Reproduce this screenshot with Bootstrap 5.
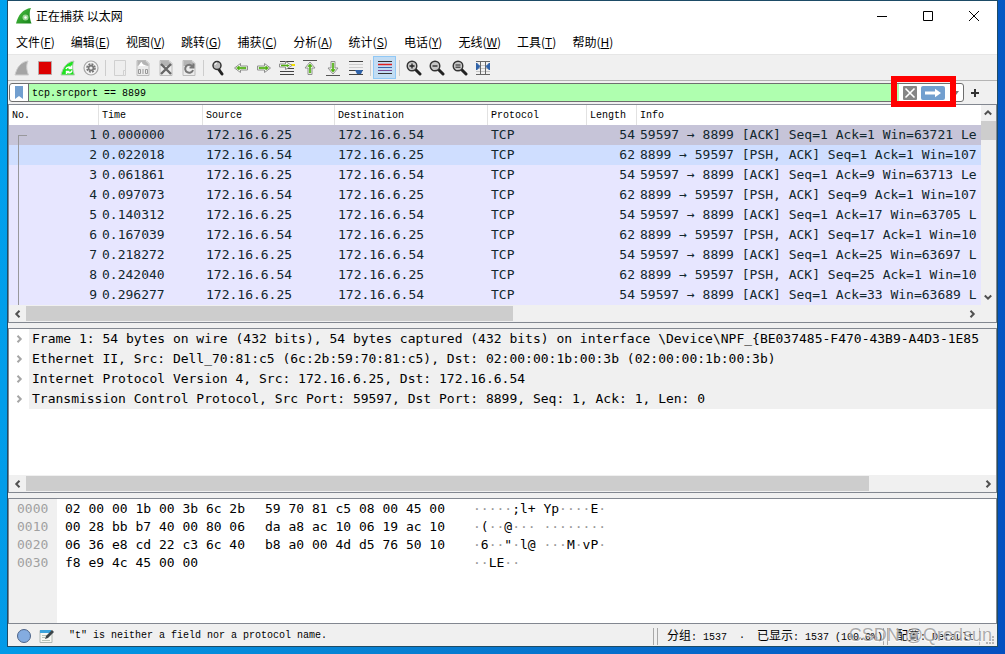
<!DOCTYPE html>
<html lang="zh-CN">
<head>
<meta charset="utf-8">
<meta name="viewport" content="width=device-width, initial-scale=1">
<title>正在捕获 以太网</title>
<link href="https://cdn.jsdelivr.net/npm/bootstrap@5.3.0/dist/css/bootstrap.min.css" rel="stylesheet">
<style>
  :root { --face: #f0f0f0; --edge: #828790; --thumb: #cdcdcd; --ui: "Noto Sans CJK SC", sans-serif; --fixed: "DejaVu Sans Mono", monospace; --small: "Liberation Mono", "Noto Sans CJK SC", monospace; }
  body { background: linear-gradient(100deg, #00a2ee 0%, #0780d2 45%, #0450c0 100%); font-family: var(--ui); font-size: 12px; line-height: 20px; color: #000; }
  .desktop { padding: 0 7px 7px; }
  .app { border: 1px solid #1d4b66; background: var(--face); }
  .btn { --bs-btn-padding-x: 0; --bs-btn-padding-y: 0; --bs-btn-border-radius: 0; --bs-btn-border-width: 0; line-height: 1; display: flex; align-items: center; justify-content: center; }
  .titlebar { height: 30px; }
  .titlebar .btn { width: 46px; height: 30px; }
  .menus { height: 23px; padding-top: 1px; }
  .menus a { color: #000; text-decoration: none; padding: 0 8px; white-space: nowrap; }
  .tools { height: 27px; border-top: 1px solid #e6e6e6; border-bottom: 1px solid #b4b4b4; padding: 0 2px; }
  .tools .btn { width: 23px; height: 23px; }
  .tools .chosen { background: #c2dcf3; border: 1px solid #90c8f6; }
  .sep { width: 6px; height: 16px; background: linear-gradient(#cdcdcd, #cdcdcd) center / 1px 100% no-repeat; }
  .filterrow { height: 23px; padding: 2px 13px 2px 1px; }
  .filterbox { height: 19px; border: 1px solid #6e6e6e; border-radius: 3px; background: #fff; margin-right: 2px; }
  .filterbox input { background: #afffaf; border: 0; border-left: 1px solid #6e6e6e; outline: 0; height: 17px; padding: 1px 3px 0; font: 10px/16px var(--small); }
  .filterbox .btn { height: 17px; }
  .callout-box { position: absolute; inset: -8px -11px -6px -8px; border: 6px solid #f00; pointer-events: none; z-index: 2; }
  .pane { border: 1px solid var(--edge); background: #fff; min-height: 0; }
  .fixed { font-family: var(--fixed); font-size: 13px; }
  .packets { table-layout: fixed; width: 100%; border-collapse: separate; border-spacing: 0; color: #12272e; }
  .packets th { font: 10px/18px var(--small); color: #000; border-right: 1px solid #e2e2e2; padding: 2px 3px 0; height: 20px; background: #fff; white-space: nowrap; }
  .packets th:last-child { border: 0; }
  .packets td { height: 20px; line-height: 20px; padding: 0 3px; white-space: pre; overflow: hidden; background: #e7e6ff; }
  .packets td:nth-child(1), .packets td:nth-child(6) { text-align: right; padding-right: 2px; }
  .packets td:first-child { position: relative; }
  .packets td:first-child::before { content: ""; position: absolute; left: 9px; top: 0; bottom: 0; border-left: 1px solid #98989c; }
  .packets .current td { background: #c6c4d8; }
  .packets .current td:first-child::before { top: 10px; width: 9px; border-top: 1px solid #98989c; }
  .packets .hovered td { background: #cfdeff; }
  .vbar { width: 16px; background: var(--face); }
  .vbar .btn { height: 16px; width: 15px; }
  .vthumb { height: 19px; width: 15px; background: var(--thumb); }
  .hbar { height: 17px; padding-top: 1px; background: var(--face); }
  .hbar .btn { width: 17px; height: 15px; }
  .hthumb { height: 15px; background: var(--thumb); }
  .details { margin: 5px 0; }
  .detail { background: var(--face); height: 20px; white-space: pre; overflow: hidden; padding-left: 3px; }
  .twist { width: 20px; height: 20px; flex: none; background: #fff; }
  .rawdata { height: 126px; line-height: 18px; }
  .rawdata pre { font: inherit; overflow: visible; margin: 0; padding-top: 1px; }
  .rawdata .offsets { background: var(--face); color: #a0a0a0; width: 48px; padding: 1px 0 0 8px; }
  .rawdata .octets { width: 200px; }
  .rawdata i { font-style: normal; color: #999; }
  .status { height: 22px; font: 10px/20px var(--small); white-space: pre; padding: 2px 0 0 9px; }
  .zh { font-family: var(--ui); font-size: 12px; }
  .message { padding-left: 14px; }
  .grip { width: 5px; height: 17px; border: solid #a8a8a8; border-width: 0 1px; flex: none; }
  .counts { padding: 0 0 0 9px; }
  .profile { padding: 0 5px 0 8px; }
  .brand { position: absolute; right: 5px; bottom: 0; font: 18px/21px "Liberation Sans", sans-serif; color: rgba(105,105,105,.55); text-shadow: 0 1px 1px #fff; pointer-events: none; }
</style>
</head>
<body>
<svg class="position-absolute" width="0" height="0" aria-hidden="true">
  <defs>
    <linearGradient id="gf" x1="0" y1="0" x2="1" y2="1"><stop stop-color="#4fc443"/><stop offset="1" stop-color="#16821a"/></linearGradient>
    <symbol id="fwd" viewBox="0 0 16 16"><path d="M1.500 6h7V3.500L14.500 8l-6 4.500V10h-7z" fill="#fff" stroke="#8f8f8f"/><path d="M3 7.300h6.800V6L12.600 8 9.800 10V8.700H3z" fill="#4fae12" stroke="#4fae12" stroke-width=".6"/></symbol>
    <symbol id="up" viewBox="0 0 16 16"><path d="M1 .5h14" stroke="#555"/><path d="M6 14.500V8H3L8 2l5 6h-3v6.500z" fill="#fff" stroke="#8f8f8f"/><path d="M7.300 13V6.500H5.800L8 3.800l2.200 2.700H8.700V13z" fill="#4fae12" stroke="#4fae12" stroke-width=".6"/></symbol>
    <symbol id="lens" viewBox="0 0 16 16"><path d="m9.500 9.500 4.500 4.500" stroke="#222" stroke-width="3" stroke-linecap="round"/><circle cx="6" cy="6" r="4.800" fill="#c6c6c6" stroke="#333" stroke-width="1.400"/></symbol>
    <symbol id="page" viewBox="0 0 16 16"><path d="M2 .5h9l3 3v12H2z" fill="#ececec" stroke="#bcbcbc"/><path d="M2.500 1h8l3 3v2h-11z" fill="#b4b4b4"/></symbol>
    <symbol id="left" viewBox="0 0 8 8"><path d="M5.500 .8 2.300 4l3.200 3.200" fill="none" stroke="#505050" stroke-width="2"/></symbol>
    <symbol id="right" viewBox="0 0 8 8"><path d="M2.500 .8 5.700 4 2.500 7.200" fill="none" stroke="currentColor" stroke-width="2"/></symbol>
  </defs>
</svg>
<div class="desktop d-flex flex-column vh-100">
<main class="app d-flex flex-column flex-grow-1 position-relative">
  <header class="titlebar d-flex align-items-center bg-white ps-2">
    <svg width="16" height="16" viewBox="0 0 16 16" aria-hidden="true"><path d="M0 15.500C2 7 7 1 15 0c-2 4-1.500 10 .5 15.500z" fill="url(#gf)"/><circle cx="9.500" cy="9.500" r="3" fill="#b5e3ac" opacity=".8"/><circle cx="9.500" cy="9.500" r="1.200" fill="#fff"/></svg>
    <span class="ms-1 me-auto">正在捕获 以太网</span>
    <button class="btn" aria-label="最小化"><svg width="10" height="10"><path d="M0 5.500h10" stroke="#000"/></svg></button>
    <button class="btn" aria-label="最大化"><svg width="10" height="10"><path d="M.5.500h9v9h-9z" fill="none" stroke="#000"/></svg></button>
    <button class="btn" aria-label="关闭"><svg width="10" height="10"><path d="m0 0 10 10M10 0 0 10" stroke="#000"/></svg></button>
  </header>
  <nav class="menus d-flex bg-white" aria-label="菜单">
    <a href="#">文件(<u>F</u>)</a><a href="#">编辑(<u>E</u>)</a><a href="#">视图(<u>V</u>)</a><a href="#">跳转(<u>G</u>)</a><a href="#">捕获(<u>C</u>)</a><a href="#">分析(<u>A</u>)</a><a href="#">统计(<u>S</u>)</a><a href="#">电话(<u>Y</u>)</a><a href="#">无线(<u>W</u>)</a><a href="#">工具(<u>T</u>)</a><a href="#">帮助(<u>H</u>)</a>
  </nav>
  <div class="tools d-flex align-items-center" role="toolbar" aria-label="主工具栏">
    <button class="btn" aria-label="开始捕获"><svg width="16" height="16"><path d="M1 15C3 7 7 2 14 1c-2 4-1.500 9 .5 14z" fill="#a5a5a5" stroke="#ccc"/></svg></button>
    <button class="btn" aria-label="停止捕获"><svg width="14" height="14"><path d="M.5.500h13v13H.5z" fill="#d00" stroke="#b9a7a7"/></svg></button>
    <button class="btn" aria-label="重新捕获"><svg width="16" height="16"><path d="M1 15C3 7 7 2 14 1c-2 4-1.500 9 .5 14z" fill="#1fe41f" stroke="#b5c9b5"/><path d="M6 9a3 3 0 0 1 5-1M12 10.500a3 3 0 0 1-5 1.500M11.500 5.500V8.500H8.500M6.500 14v-2.500h3" fill="none" stroke="#fff" stroke-width="1.400"/></svg></button>
    <button class="btn" aria-label="捕获选项"><svg width="16" height="16"><circle cx="8" cy="8" r="7" fill="#f4f4f4" stroke="#a6a6a6" stroke-width="1.200"/><circle cx="8" cy="8" r="4" fill="none" stroke="#777" stroke-width="1.600" stroke-dasharray="2 1.140"/><circle cx="8" cy="8" r="3.200" fill="#777"/><circle cx="8" cy="8" r="1.600" fill="#eee"/></svg></button>
    <span class="sep"></span>
    <button class="btn" aria-label="打开"><svg width="14" height="16"><path d="M1.500.5h11v10h-2v5h-9zM10.500 15.500h2v-5" fill="#eee" stroke="#d0d0d0"/></svg></button>
    <button class="btn" aria-label="保存"><svg width="16" height="16"><use href="#page"/><path d="M3 6c2-1 2-4 4-4 0 3 3 3 6 4z" fill="#fff"/><path d="M3.500 9.500h2v4h-2zM8 9v5M10.500 9.500h2v4h-2z" fill="none" stroke="#999"/></svg></button>
    <button class="btn" aria-label="关闭文件"><svg width="16" height="16"><use href="#page"/><path d="m3 4 10 10M13 4 3 14" stroke="#666" stroke-width="2.400"/></svg></button>
    <button class="btn" aria-label="重新加载"><svg width="16" height="16"><use href="#page"/><path d="M11.500 6.500A4 4 0 1 0 12 10M12.500 3.500v4h-4" fill="none" stroke="#777" stroke-width="2"/></svg></button>
    <span class="sep"></span>
    <button class="btn" aria-label="查找"><svg width="14" height="16" viewBox="0 0 14 16"><path d="m7.500 9 3.500 5" stroke="#222" stroke-width="3" stroke-linecap="round"/><circle cx="6" cy="5.500" r="4" fill="#bbb" stroke="#333" stroke-width="1.500"/><path d="M4 5a2 2 0 0 1 2-2" stroke="#fff" fill="none"/></svg></button>
    <button class="btn" aria-label="后退"><svg width="16" height="16"><use href="#fwd" transform="matrix(-1 0 0 1 16 0)"/></svg></button>
    <button class="btn" aria-label="前进"><svg width="16" height="16"><use href="#fwd"/></svg></button>
    <button class="btn" aria-label="转到分组"><svg width="16" height="16"><path d="M1 1.500h14M1 11.500h14M1 14.500h14M8 8.500h7" stroke="#444"/><path d="M10 5h6" stroke="#f3e000" stroke-width="2"/><path d="M.5 4h6V1.500L13 5.500l-6.500 4V7h-6z" fill="#fff" stroke="#8f8f8f"/><path d="M2 4.800h5.800V3.900L10.800 5.500 7.800 7.200V6.300H2z" fill="#4fae12"/></svg></button>
    <button class="btn" aria-label="首个分组"><svg width="16" height="16"><use href="#up"/></svg></button>
    <button class="btn" aria-label="最后分组"><svg width="16" height="16"><use href="#up" transform="matrix(1 0 0 -1 0 16)"/></svg></button>
    <button class="btn" aria-label="自动滚动"><svg width="16" height="16"><path d="M1 1.500h14M1 10.500h14M1 14.500h14" stroke="#444"/><path d="M1 4.500h14M1 7.500h14" stroke="#ccc"/><path d="M7 10h8l-2 4H9z" fill="#2f62a8"/></svg></button>
    <span class="sep"></span>
    <button class="btn chosen" aria-label="着色"><svg width="16" height="16"><path d="M1 1.500h14M1 13.500h14" stroke="#333"/><path d="M1 4.500h14" stroke="#e02020" stroke-width="1.500"/><path d="M1 7.500h14" stroke="#3566a8"/><path d="M1 10.500h14" stroke="#7a4a98"/></svg></button>
    <span class="sep"></span>
    <button class="btn" aria-label="放大"><svg width="16" height="16"><use href="#lens"/><path d="M3.500 6h5M6 3.500v5" stroke="#222" stroke-width="1.300"/></svg></button>
    <button class="btn" aria-label="缩小"><svg width="16" height="16"><use href="#lens"/><path d="M3.500 6h5" stroke="#222" stroke-width="1.300"/></svg></button>
    <button class="btn" aria-label="原始大小"><svg width="16" height="16"><use href="#lens"/><path d="M3.500 5h5M3.500 7.200h5" stroke="#222"/></svg></button>
    <button class="btn" aria-label="调整列宽"><svg width="16" height="16"><path d="M1 5.500h14M1 8.500h14M1 11.500h14" stroke="#c4c4c4"/><path d="M1 1.500h14M1 14.500h14M5.500 1v14M10.500 1v14" stroke="#666"/><path d="M1.500 3v7L5 6.500zM14.500 3v7L11 6.500z" fill="#2f62a8" stroke="#2f62a8"/></svg></button>
  </div>
  <form class="filterrow d-flex align-items-center" onsubmit="return false">
    <div class="filterbox d-flex align-items-center flex-grow-1">
      <button type="button" class="btn px-1" aria-label="书签"><svg width="10" height="14"><path d="M1 0h8v13L5 10l-4 3z" fill="#729fcf"/></svg></button>
      <input class="flex-grow-1" type="text" aria-label="显示过滤器" value="tcp.srcport == 8899" spellcheck="false">
      <div class="d-flex gap-1 ps-1 position-relative">
        <button type="button" class="btn" aria-label="清除"><svg width="14" height="14"><rect width="14" height="14" rx="1" fill="#858585"/><path d="m2.500 2.500 9 9M11.500 2.500l-9 9" stroke="#fff" stroke-width="1.600"/></svg></button>
        <button type="submit" class="btn" aria-label="应用"><svg width="24" height="14"><rect width="24" height="14" rx="2" fill="#729fcf"/><path d="M4 5.500h10V2.800L20 7l-6 4.200V8.500H4z" fill="#fff"/></svg></button>
        <span class="callout-box"></span>
      </div>
      <button type="button" class="btn ps-2 pe-1" aria-label="历史"><svg width="6" height="4"><path d="M0 0h6L3 4z" fill="#777"/></svg></button>
    </div>
    <button type="button" class="btn px-1" aria-label="添加按钮"><svg width="10" height="10"><path d="M1 5h8M5 1v8" stroke="#333" stroke-width="2"/></svg></button>
  </form>
  <section class="pane" aria-label="分组列表">
    <div class="d-flex">
      <div class="flex-grow-1 overflow-hidden">
        <table class="packets fixed">
          <colgroup><col style="width:90px"><col style="width:104px"><col style="width:132px"><col style="width:153px"><col style="width:99px"><col style="width:50px"><col></colgroup>
          <thead><tr><th>No.</th><th>Time</th><th>Source</th><th>Destination</th><th>Protocol</th><th>Length</th><th>Info</th></tr></thead>
          <tbody>
            <tr class="current"><td>1</td><td>0.000000</td><td>172.16.6.25</td><td>172.16.6.54</td><td>TCP</td><td>54</td><td>59597 → 8899 [ACK] Seq=1 Ack=1 Win=63721 Le</td></tr>
            <tr class="hovered"><td>2</td><td>0.022018</td><td>172.16.6.54</td><td>172.16.6.25</td><td>TCP</td><td>62</td><td>8899 → 59597 [PSH, ACK] Seq=1 Ack=1 Win=107</td></tr>
            <tr><td>3</td><td>0.061861</td><td>172.16.6.25</td><td>172.16.6.54</td><td>TCP</td><td>54</td><td>59597 → 8899 [ACK] Seq=1 Ack=9 Win=63713 Le</td></tr>
            <tr><td>4</td><td>0.097073</td><td>172.16.6.54</td><td>172.16.6.25</td><td>TCP</td><td>62</td><td>8899 → 59597 [PSH, ACK] Seq=9 Ack=1 Win=107</td></tr>
            <tr><td>5</td><td>0.140312</td><td>172.16.6.25</td><td>172.16.6.54</td><td>TCP</td><td>54</td><td>59597 → 8899 [ACK] Seq=1 Ack=17 Win=63705 L</td></tr>
            <tr><td>6</td><td>0.167039</td><td>172.16.6.54</td><td>172.16.6.25</td><td>TCP</td><td>62</td><td>8899 → 59597 [PSH, ACK] Seq=17 Ack=1 Win=10</td></tr>
            <tr><td>7</td><td>0.218272</td><td>172.16.6.25</td><td>172.16.6.54</td><td>TCP</td><td>54</td><td>59597 → 8899 [ACK] Seq=1 Ack=25 Win=63697 L</td></tr>
            <tr><td>8</td><td>0.242040</td><td>172.16.6.54</td><td>172.16.6.25</td><td>TCP</td><td>62</td><td>8899 → 59597 [PSH, ACK] Seq=25 Ack=1 Win=10</td></tr>
            <tr><td>9</td><td>0.296277</td><td>172.16.6.25</td><td>172.16.6.54</td><td>TCP</td><td>54</td><td>59597 → 8899 [ACK] Seq=1 Ack=33 Win=63689 L</td></tr>
          </tbody>
        </table>
      </div>
      <div class="vbar d-flex flex-column">
        <button class="btn" aria-label="向上"><svg width="8" height="8"><use href="#left" transform="rotate(90 4 4)"/></svg></button>
        <div class="vthumb mb-auto"></div>
        <button class="btn" aria-label="向下"><svg width="8" height="8"><use href="#left" transform="rotate(-90 4 4)"/></svg></button>
      </div>
    </div>
    <div class="hbar d-flex pe-3">
      <button class="btn" aria-label="向左"><svg width="8" height="8"><use href="#left"/></svg></button>
      <div class="flex-grow-1"><div class="hthumb" style="width:52%"></div></div>
      <button class="btn" aria-label="向右"><svg width="8" height="8"><use href="#right" color="#505050"/></svg></button>
    </div>
  </section>
  <section class="pane details d-flex flex-column flex-grow-1" aria-label="分组详情">
    <div class="fixed flex-grow-1 overflow-hidden">
      <div class="d-flex"><button class="btn twist" aria-label="展开"><svg width="8" height="8"><use href="#right" color="#a6a6a6"/></svg></button><div class="detail flex-grow-1">Frame 1: 54 bytes on wire (432 bits), 54 bytes captured (432 bits) on interface \Device\NPF_{BE037485-F470-43B9-A4D3-1E85</div></div>
      <div class="d-flex"><button class="btn twist" aria-label="展开"><svg width="8" height="8"><use href="#right" color="#a6a6a6"/></svg></button><div class="detail flex-grow-1">Ethernet II, Src: Dell_70:81:c5 (6c:2b:59:70:81:c5), Dst: 02:00:00:1b:00:3b (02:00:00:1b:00:3b)</div></div>
      <div class="d-flex"><button class="btn twist" aria-label="展开"><svg width="8" height="8"><use href="#right" color="#a6a6a6"/></svg></button><div class="detail flex-grow-1">Internet Protocol Version 4, Src: 172.16.6.25, Dst: 172.16.6.54</div></div>
      <div class="d-flex"><button class="btn twist" aria-label="展开"><svg width="8" height="8"><use href="#right" color="#a6a6a6"/></svg></button><div class="detail flex-grow-1">Transmission Control Protocol, Src Port: 59597, Dst Port: 8899, Seq: 1, Ack: 1, Len: 0</div></div>
    </div>
    <div class="hbar d-flex">
      <button class="btn" aria-label="向左"><svg width="8" height="8"><use href="#left"/></svg></button>
      <div class="flex-grow-1"><div class="hthumb" style="width:88.500%"></div></div>
      <button class="btn" aria-label="向右"><svg width="8" height="8"><use href="#right" color="#505050"/></svg></button>
    </div>
  </section>
  <section class="pane rawdata fixed d-flex" aria-label="分组字节">
    <pre class="offsets me-2">0000
0010
0020
0030</pre>
    <pre class="octets">02 00 00 1b 00 3b 6c 2b
00 28 bb b7 40 00 80 06
06 36 e8 cd 22 c3 6c 40
f8 e9 4c 45 00 00</pre>
    <pre class="octets me-2">59 70 81 c5 08 00 45 00
da a8 ac 10 06 19 ac 10
b8 a0 00 4d d5 76 50 10</pre>
    <pre><i>·····</i>;l+ Yp<i>····</i>E<i>·</i>
<i>·</i>(<i>··</i>@<i>···</i> <i>········</i>
<i>·</i>6<i>··</i>"<i>·</i>l@ <i>···</i>M<i>·</i>vP<i>·</i>
<i>··</i>LE<i>··</i></pre>
  </section>
  <footer class="status d-flex align-items-center">
    <svg width="14" height="14"><circle cx="7" cy="7" r="6.500" fill="#84ace0" stroke="#4d6488"/></svg>
    <svg class="ms-2" width="16" height="16"><path d="M1 2.500h12v12H1z" fill="#f7f7f2" stroke="#b0b8b4"/><path d="M1 2h11v3H1z" fill="#3ba3dc"/><path d="M3 7.500h5M3 9.500h3M3 12.500h8" stroke="#b8c4b8"/><path d="m6 11 1-3 6-6 2 2-6 6z" fill="#3c4448"/></svg>
    <span class="message me-auto">"t" is neither a field nor a protocol name.</span>
    <span class="grip"></span>
    <span class="counts"><span class="zh">分组</span>: 1537  ·  <span class="zh">已显示</span>: 1537 (100.0%)</span>
    <span class="grip"></span>
    <span class="profile"><span class="zh">配置</span>: Default</span>
    <svg width="18" height="17"><path d="M.5 0v17" stroke="#c0c0c0"/><path d="M13 8h2v2h-2zM10 11h2v2h-2zM13 11h2v2h-2zM7 14h2v2H7zM10 14h2v2h-2zM13 14h2v2h-2z" fill="#b4b4b4"/></svg>
  </footer>
  <span class="brand">CSDN @Qredsun</span>
</main>
</div>
<script src="https://cdn.jsdelivr.net/npm/bootstrap@5.3.0/dist/js/bootstrap.bundle.min.js"></script>
</body>
</html>
